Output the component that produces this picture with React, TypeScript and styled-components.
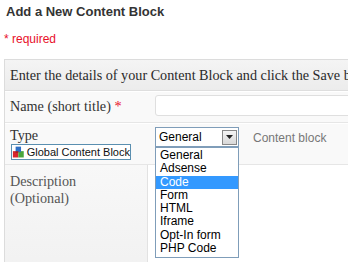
import React from "react";
import styled, { createGlobalStyle } from "styled-components";

const Global = createGlobalStyle`
  html, body { margin: 0; padding: 0; background: #fff; }
  body { width: 348px; height: 262px; overflow: hidden; }
`;

const Page = styled.div`
  width: 348px;
  height: 262px;
  overflow: hidden;
  position: relative;
`;

const Title = styled.h2`
  margin: 0;
  padding: 4px 0 0 6px;
  font: bold 13px "Liberation Sans", Arial, sans-serif;
  color: #333;
  height: 24px;
`;

const Required = styled.div`
  padding: 4px 0 0 4px;
  height: 18px;
  font: 12px "Liberation Sans", Arial, sans-serif;
  color: #e8102a;
`;

const Table = styled.div`
  margin: 9px 0 0 4px;
  width: 420px;
  border-top: 1px solid #dcdcdc;
  border-left: 1px solid #dcdcdc;
  font-family: "Liberation Serif", "Times New Roman", serif;
  color: #333;
`;

const HeaderRow = styled.div`
  height: 30px;
  background: linear-gradient(#f4f4f4, #ececec);
  border-bottom: 1px solid #dedede;
  display: flex;
  align-items: center;
  padding-left: 5px;
  font-size: 14.2px;
  white-space: nowrap;
  color: #2a2a2a;
`;

const Row = styled.div<{ $h: number; $bg?: string }>`
  display: grid;
  grid-template-columns: 143px 1fr;
  height: ${(p) => p.$h}px;
  background: ${(p) => p.$bg || "#f9f9f9"};
  border-bottom: 1px solid #e6e6e6;
  border-top: 1px solid #fff;
`;

const Label = styled.div`
  padding: 6px 0 0 5px;
  font-size: 14.2px;
  line-height: 17px;
  color: #333;
  white-space: nowrap;
`;

const Star = styled.span`
  color: #e8102a;
`;

const Cell = styled.div`
  padding: 3px 0 0 7px;
  display: flex;
  align-items: flex-start;
`;

const TextInput = styled.div`
  width: 260px;
  height: 19px;
  background: #fff;
  border: 1px solid #dfdfdf;
  border-radius: 3px;
`;

const SelectBox = styled.div`
  border: 1px solid #7f9db9;
  background: #fff;
  display: flex;
  align-items: center;
  justify-content: space-between;
  font: 12px "Liberation Sans", Arial, sans-serif;
  color: #000;
  padding-left: 3px;
  box-sizing: border-box;
  width: 84px;
  height: 20px;
`;

const SelectBtn = styled.div`
  width: 15px;
  height: 15px;
  margin-right: 1px;
  border: 1px solid #888;
  background: linear-gradient(#f4f4f4, #d8d8d8);
  display: flex;
  align-items: center;
  justify-content: center;
  box-sizing: border-box;
`;

const Hint = styled.span`
  font: 12px "Liberation Sans", Arial, sans-serif;
  color: #777;
  margin: 4px 0 0 14px;
`;

const TypeLabel = styled.div`
  padding: 4px 0 0 5px;
  font-size: 14.2px;
  line-height: 15px;
  color: #333;
`;

const GlobalLink = styled.div`
  margin-top: 1px;
  margin-left: 6px;
  width: 118px;
  height: 14px;
  border: 1px solid #5a8fb0;
  display: flex;
  align-items: center;
  gap: 2px;
  font: 11px "Liberation Sans", Arial, sans-serif;
  color: #111;
  background: #fff;
  white-space: nowrap;
  overflow: hidden;
`;

const DescRow = styled.div`
  display: grid;
  grid-template-columns: 143px 1fr;
  height: 110px;
`;

const DescLabel = styled.div`
  background: linear-gradient(#f8f8f8, #f1f1f1);
  border-right: 1px solid #e2e2e2;
  padding: 8px 0 0 5px;
  font-size: 14.2px;
  line-height: 17px;
  color: #555;
`;

const DescRight = styled.div`
  background: #fff;
`;

const Dropdown = styled.div`
  position: absolute;
  left: 155px;
  top: 147px;
  width: 84px;
  box-sizing: border-box;
  border: 1px solid #7f9db9;
  background: #fff;
  font: 12px "Liberation Sans", Arial, sans-serif;
  padding: 1px 0 2px;
`;

const Option = styled.div<{ $active?: boolean }>`
  height: 13.3px;
  line-height: 13.3px;
  padding-left: 4px;
  color: ${(p) => (p.$active ? "#fff" : "#000")};
  background: ${(p) => (p.$active ? "#3399ff" : "transparent")};
`;

const options = ["General", "Adsense", "Code", "Form", "HTML", "Iframe", "Opt-In form", "PHP Code"];

function BlockIcon() {
  return (
    <svg width="14" height="13" viewBox="0 0 14 13">
      <rect x="1" y="5" width="6" height="7" fill="#d8262c" />
      <rect x="7" y="5" width="6" height="7" fill="#4aa63c" />
      <rect x="4" y="0" width="6" height="6" fill="#2f6fc4" />
      <rect x="4" y="5" width="3" height="2" fill="#a22" />
    </svg>
  );
}

export default function App() {
  return (
    <Page>
      <Global />
      <Title>Add a New Content Block</Title>
      <Required>* required</Required>
      <Table>
        <HeaderRow>Enter the details of your Content Block and click the Save button</HeaderRow>
        <Row $h={30}>
          <Label>
            Name (short title) <Star>*</Star>
          </Label>
          <Cell>
            <TextInput />
          </Cell>
        </Row>
        <Row $h={40}>
          <div>
            <TypeLabel>Type</TypeLabel>
            <GlobalLink>
              <BlockIcon />
              Global Content Block
            </GlobalLink>
          </div>
          <Cell>
            <SelectBox>
              General
              <SelectBtn>
                <svg width="7" height="4" viewBox="0 0 7 4">
                  <path d="M0 0h7L3.5 4z" fill="#222" />
                </svg>
              </SelectBtn>
            </SelectBox>
            <Hint>Content block</Hint>
          </Cell>
        </Row>
        <DescRow>
          <DescLabel>
            Description
            <br />
            (Optional)
          </DescLabel>
          <DescRight />
        </DescRow>
      </Table>
      <Dropdown>
        {options.map((o) => (
          <Option key={o} $active={o === "Code"}>
            {o}
          </Option>
        ))}
      </Dropdown>
    </Page>
  );
}
